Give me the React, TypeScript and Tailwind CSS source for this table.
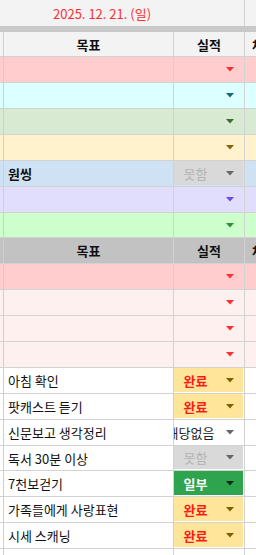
import React from "react";

const FONT = { fontFamily: '"Noto Sans CJK KR", "Noto Sans", sans-serif' };

function Arrow({ color }: { color: string }) {
  return (
    <svg width="8" height="5" viewBox="0 0 8 5" className="block">
      <path d="M0 0 L8 0 L4 4.5 Z" fill={color} />
    </svg>
  );
}

type Status = { text: string; color: string; bg: string; bold?: boolean; arrow: string; shift?: number };

type RowDef = {
  h: number;
  bg: string;
  label?: string;
  bold?: boolean;
  arrow?: string;
  status?: Status;
};

const done: Status = { text: "완료", color: "#ff1a1a", bg: "#ffe599", bold: true, arrow: "#7f6000" };

const rows: RowDef[] = [
  { h: 26, bg: "#ffcdcd", arrow: "#ff2f2f" },
  { h: 26, bg: "#dcffff", arrow: "#1d6a6e" },
  { h: 26, bg: "#d9ead3", arrow: "#3a6e2a" },
  { h: 26, bg: "#fff2cc", arrow: "#86660a" },
  {
    h: 26,
    bg: "#cfe2f3",
    label: "원씽",
    bold: true,
    status: { text: "못함", color: "#b4b4b4", bg: "#d9d9d9", arrow: "#666666" },
  },
  { h: 26, bg: "#e1ddfc", arrow: "#6a48ee" },
  { h: 25, bg: "#ccffcc", arrow: "#2c8f2c" },
];

const rows2: RowDef[] = [
  { h: 26, bg: "#ffcdcd", arrow: "#ff2f2f" },
  { h: 26, bg: "#fff0f0", arrow: "#ff2f2f" },
  { h: 26, bg: "#fff0f0", arrow: "#ff2f2f" },
  { h: 26, bg: "#fff0f0", arrow: "#ff2f2f" },
  { h: 26, bg: "#ffffff", label: "아침 확인", status: done },
  { h: 26, bg: "#ffffff", label: "팟캐스트 듣기", status: done },
  {
    h: 26,
    bg: "#ffffff",
    label: "신문보고 생각정리",
    status: { text: "해당없음", color: "#222222", bg: "#ffffff", arrow: "#666666", shift: -5 },
  },
  {
    h: 25,
    bg: "#ffffff",
    label: "독서 30분 이상",
    status: { text: "못함", color: "#b4b4b4", bg: "#d9d9d9", arrow: "#666666" },
  },
  {
    h: 26,
    bg: "#ffffff",
    label: "7천보걷기",
    status: { text: "일부", color: "#ffffff", bg: "#2ea44f", bold: true, arrow: "#0d2a14" },
  },
  { h: 26, bg: "#ffffff", label: "가족들에게 사랑표현", status: done },
  { h: 26, bg: "#ffffff", label: "시세 스캐닝", status: done },
];

function DataRow({ r }: { r: RowDef }) {
  return (
    <div
      className="flex border-b border-[#d2d2d2] box-border"
      style={{ height: r.h, backgroundColor: r.bg }}
    >
      <div className="w-[4px] shrink-0 border-r border-[#cfcfcf]" />
      <div className="w-[170px] shrink-0 border-r border-[#d2d2d2] flex items-center pl-[4px] overflow-hidden">
        {r.label && (
          <span
            className={`text-[13px] leading-none whitespace-nowrap text-[#111] ${r.bold ? "font-bold" : ""}`}
          >
            {r.label}
          </span>
        )}
      </div>
      <div className="w-[71px] shrink-0 border-r border-[#d2d2d2] relative overflow-hidden">
        {r.status ? (
          <div
            className="absolute left-0 top-0 right-[1px] bottom-[1px] flex items-center"
            style={{ backgroundColor: r.status.bg }}
          >
            <div className="w-[43px] shrink-0 flex justify-center">
              <span
                className={`text-[13px] leading-none whitespace-nowrap ${r.status.bold ? "font-bold" : ""}`}
                style={{
                  color: r.status.color,
                  transform: r.status.shift ? `translateX(${r.status.shift}px)` : undefined,
                }}
              >
                {r.status.text}
              </span>
            </div>
            <div className="ml-[9px]">
              <Arrow color={r.status.arrow} />
            </div>
          </div>
        ) : (
          <div className="absolute inset-0 flex items-center">
            <div className="ml-[52px]">{r.arrow && <Arrow color={r.arrow} />}</div>
          </div>
        )}
      </div>
      <div className="flex-1" />
    </div>
  );
}

function HeaderRow({ bg, h }: { bg: string; h: number }) {
  return (
    <div
      className="flex border-b border-[#d2d2d2] box-border"
      style={{ height: h, backgroundColor: bg }}
    >
      <div className="w-[4px] shrink-0 border-r border-[#cfcfcf]" />
      <div className="w-[170px] shrink-0 border-r border-[#d2d2d2] flex items-center justify-center">
        <span className="text-[13px] font-bold leading-none text-[#111]">목표</span>
      </div>
      <div className="w-[71px] shrink-0 border-r border-[#d2d2d2] flex items-center justify-center">
        <span className="text-[13px] font-bold leading-none text-[#111]">실적</span>
      </div>
      <div className="flex-1 overflow-hidden flex items-center pl-[7px]">
        <span className="text-[13px] font-bold leading-none text-[#111] whitespace-nowrap">체크</span>
      </div>
    </div>
  );
}

export default function App() {
  return (
    <div className="w-[256px] h-[555px] overflow-hidden bg-white" style={FONT}>
      <div className="flex h-[26px] bg-[#f3f3f3]">
        <div className="w-[245px] shrink-0 border-r border-[#d2d2d2] flex items-center pl-[53px]">
          <span className="text-[13px] leading-none text-[#ff3030] whitespace-nowrap">
            2025. 12. 21. (일)
          </span>
        </div>
        <div className="flex-1" />
      </div>
      <div className="h-[6px] bg-[#c8c8c8]" />
      <HeaderRow bg="#f3f3f3" h={25} />
      {rows.map((r, i) => (
        <DataRow key={"a" + i} r={r} />
      ))}
      <HeaderRow bg="#c2c2c2" h={26} />
      {rows2.map((r, i) => (
        <DataRow key={"b" + i} r={r} />
      ))}
      <div className="flex h-[10px] bg-white">
        <div className="w-[4px] shrink-0 border-r border-[#cfcfcf]" />
        <div className="w-[170px] shrink-0 border-r border-[#d2d2d2]" />
        <div className="w-[71px] shrink-0 border-r border-[#d2d2d2]" />
      </div>
    </div>
  );
}
